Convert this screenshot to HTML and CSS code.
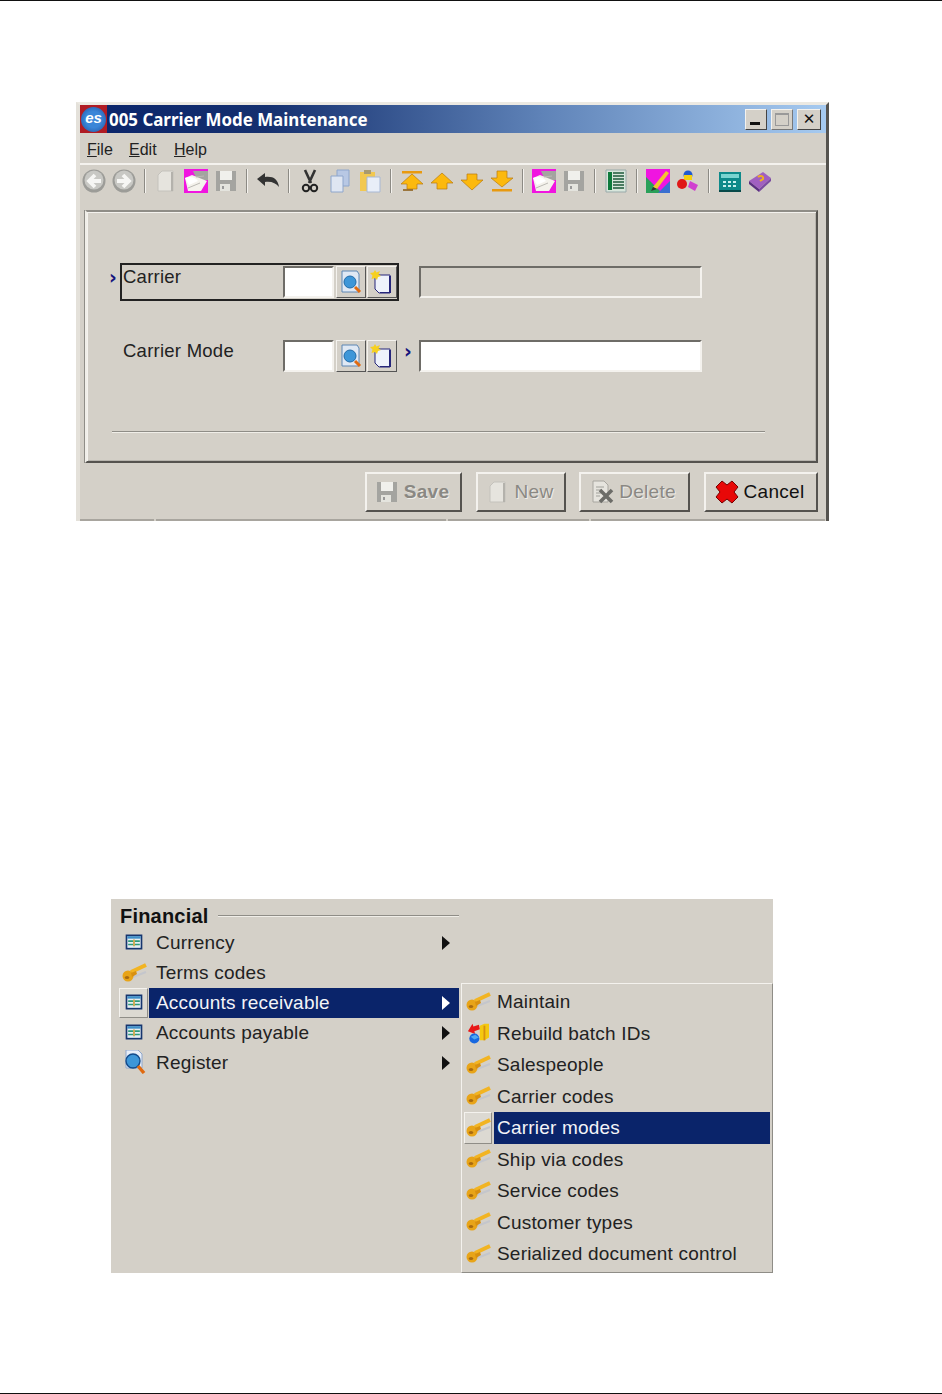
FILE: index.html
```html
<!DOCTYPE html>
<html lang="en">
<head>
<meta charset="utf-8">
<title>005 Carrier Mode Maintenance</title>
<link rel="stylesheet" href="styles.css">
</head>
<body>
<svg class="defs" width="0" height="0" aria-hidden="true">
  <defs>
    <symbol id="back" viewBox="0 0 24 24"><circle cx="12" cy="12" r="11.5" fill="#9c9c98"/><circle cx="12" cy="11" r="9.500" fill="#c8c8c4"/><path d="M19 12H9M13 6 7 12l6 6" fill="none" stroke="#f6f6f4" stroke-width="3.800"/></symbol>
    <symbol id="fwd" viewBox="0 0 24 24"><circle cx="12" cy="12" r="11.5" fill="#9c9c98"/><circle cx="12" cy="11" r="9.500" fill="#c8c8c4"/><path d="M5 12h10M11 6l6 6-6 6" fill="none" stroke="#f6f6f4" stroke-width="3.800"/></symbol>
    <symbol id="newdoc" viewBox="0 0 24 24"><path d="M8 2h11v20H4V6z" fill="#e6e4de" stroke="#c4c2bc"/><path d="M17 3h2v19h-2z" fill="#b4b2ac"/></symbol>
    <symbol id="open" viewBox="0 0 24 24"><path d="M0 0h24v24H0z" fill="#f015e0"/><path d="M9 2h15v9H13z" fill="#a4a4a0"/><path d="M1 9l7-3 10 4 5 2-6 10H4z" fill="#f4f2ec"/><path d="M1 9c5-2 10-1 13 3l-9 4z" fill="#fff"/><path d="M4 19l12-5M12 8l8-1" stroke="#bcbab4"/></symbol>
    <symbol id="disk" viewBox="0 0 24 24"><path d="M2 2h20v20H2z" fill="#a4a4a0"/><path d="M6 2h12v9H6z" fill="#f0f0ec"/><path d="M6 15h10v7H6z" fill="#e4e4de"/><path d="M8 17h2v3H8z" fill="#999"/></symbol>
    <symbol id="undo" viewBox="0 0 24 24"><path d="M1 10l8-6v4c8-1 13 2 14 10-3-4-8-6-14-5v4z" fill="#333"/></symbol>
    <symbol id="cut" viewBox="0 0 24 24"><path d="M7 1l6 13M17 1l-6 13" stroke="#333" stroke-width="2.6" fill="none"/><circle cx="8" cy="19" r="3.2" fill="none" stroke="#222" stroke-width="2"/><circle cx="16" cy="19" r="3.2" fill="none" stroke="#222" stroke-width="2"/></symbol>
    <symbol id="copy" viewBox="0 0 24 24"><path d="M9 1h12v16H9z" fill="#b8c8e4" stroke="#8ea6cc"/><path d="M3 7h12v16H3z" fill="#dfe6f2" stroke="#8ea6cc"/></symbol>
    <symbol id="paste" viewBox="0 0 24 24"><path d="M2 3h15v19H2z" fill="#f2c850"/><path d="M6 1h7v4H6z" fill="#a89a70"/><path d="M9 8h13v15H9z" fill="#e8eef8" stroke="#a8b8d4"/></symbol>
    <symbol id="first" viewBox="0 0 24 24"><path d="M2 2h20v2.5H2z" fill="#e89a10"/><path d="M12 5 23 15h-6v5H7v-5H1z" fill="#fcb90e" stroke="#b87a10" stroke-width=".7"/><path d="M3 21h10" stroke="#8a5a10" stroke-width="1.5"/></symbol>
    <symbol id="prev" viewBox="0 0 24 24"><path d="M12 4 23 14h-6v6H7v-6H1z" fill="#fcb90e" stroke="#b87a10" stroke-width=".7"/></symbol>
    <symbol id="next" viewBox="0 0 24 24"><path d="M12 21 23 11h-6V5H7v6H1z" fill="#fcb90e" stroke="#b87a10" stroke-width=".7"/></symbol>
    <symbol id="last" viewBox="0 0 24 24"><path d="M12 18 23 9h-6V2H7v7H1z" fill="#fcb90e" stroke="#b87a10" stroke-width=".7"/><path d="M2 20h20v2.5H2z" fill="#e89a10"/></symbol>
    <symbol id="list" viewBox="0 0 24 24"><path d="M2 1h20v22H2z" fill="#d8e6dc" stroke="#9aa"/><path d="M4 3h4v18H4z" fill="#0e7a3c"/><path d="M9 4h11M9 7h11M9 10h11M9 13h11M9 16h11M9 19h11" stroke="#1d5a3a" stroke-width="1.3"/></symbol>
    <symbol id="palette" viewBox="0 0 24 24"><path d="M0 0h24v24H0z" fill="#f015e0"/><path d="M0 8l16 16H0z" fill="#2aa05a"/><path d="M12 24 24 12v12z" fill="#3a6fd0"/><path d="M7 18 20 2l3 2L11 20z" fill="#f4c430"/><path d="M5 22l2-4 4 2z" fill="#333"/></symbol>
    <symbol id="blocks" viewBox="0 0 24 24"><circle cx="12" cy="6" r="4.5" fill="#1f5ad0"/><path d="M8 6h8v5H8z" fill="#f4d010"/><circle cx="6" cy="15" r="5" fill="#e01818"/><path d="M14 12l8 4-3 6-7-4z" fill="#d040d0"/></symbol>
    <symbol id="calc" viewBox="0 0 24 24"><path d="M1 3h22v19H1z" fill="#0e8a8a"/><path d="M3 5h18v4H3z" fill="#7ad4d0"/><path d="M5 12h3v2H5zm5 0h3v2h-3zm5 0h3v2h-3zM5 16h3v2H5zm5 0h3v2h-3zm5 0h3v2h-3z" fill="#c8f0ee"/><path d="M1 21h22v2H1z" fill="#084a4a"/></symbol>
    <symbol id="book" viewBox="0 0 24 24"><path d="M1 12 15 3l8 6-12 11z" fill="#a060c0"/><path d="M1 12l10 8v3L1 15z" fill="#5a2f80"/><path d="M11 20l12-11v3L11 23z" fill="#7a4aa0"/><path d="M10 8c2-2 6-1 5 2l-3 2" fill="none" stroke="#f0b020" stroke-width="2"/></symbol>
    <symbol id="lookup" viewBox="0 0 24 24"><path d="M3 1h15l2 3v18H3z" fill="#dfe8f4" stroke="#5d86b4"/><circle cx="11" cy="12" r="6" fill="#3d96d8" stroke="#1f6aa8"/><path d="M16 17l5 5" stroke="#e06a10" stroke-width="3"/></symbol>
    <symbol id="create" viewBox="0 0 24 24"><path d="M5 5h15v18H9l-4-4z" fill="#eef2fb" stroke="#25257a"/><path d="M19 6h2v17H10v-1h9z" fill="#25257a"/><path d="M5 0l1.5 2.5L10 1 8.5 4.500 11 6 8 7 7 10 5 8 1.500 9 2.500 5.500 0 3l3.500-.5z" fill="#f6d020"/></symbol>
    <symbol id="x" viewBox="0 0 24 24"><path d="M7 1l5 4 5-4 6 6-4 5 4 5-6 6-5-4-5 4-6-6 4-5-4-5z" fill="#e80808" stroke="#700" stroke-width="1"/></symbol>
    <symbol id="del" viewBox="0 0 24 24"><path d="M3 1h11l4 4v17H3z" fill="#e6e4de" stroke="#a8a6a0"/><path d="M6 7h8M6 10h6M6 13h5M6 16h4" stroke="#a0a09a"/><path d="M10 22l12-12M10 10l12 12" stroke="#6c6c68" stroke-width="3.6"/></symbol>
    <symbol id="key" viewBox="0 0 26 22"><path d="M12 15 25 10" stroke="#c4c6cc" stroke-width="2" fill="none"/><path d="M25 3 10 10" stroke="#f2b422" stroke-width="4" fill="none"/><circle cx="7" cy="14" r="5.500" fill="#e8a418"/><ellipse cx="6" cy="15.500" rx="2.200" ry="1.500" fill="#a86a10"/><path d="M10 11l5-2 1 3-5 3z" fill="#d89010"/></symbol>
    <symbol id="table" viewBox="0 0 24 24"><path d="M2 3h20v18H2z" fill="#17356e"/><path d="M4 5h16v14H4z" fill="#e6eef4"/><path d="M4 5h16v3H4z" fill="#3f8fc8"/><path d="M5 10h6v2H5zm8 0h6v2h-6zM5 14h6v2H5zm8 0h6v2h-6z" fill="#2f9a7a"/><path d="M11 9h2v8h-2z" fill="#c8a03a"/></symbol>
    <symbol id="search" viewBox="0 0 24 24"><path d="M4 0h12l4 4v14H4z" fill="#e8eef8" stroke="#8ea6cc"/><circle cx="11" cy="11" r="7" fill="#3d96d8" stroke="#124a8a" stroke-width="1.400"/><path d="M16 16l6 7" stroke="#e06a10" stroke-width="3.400"/></symbol>
    <symbol id="rebuild" viewBox="0 0 26 24"><path d="M15 4l5-2h5v15l-5 3h-5z" fill="#f4c810"/><path d="M19 4h2v16h-2z" fill="#d89010"/><path d="M2 10l5-8 1 3 6-2 1 5-6 2 1 3z" fill="#e81818"/><circle cx="9" cy="18" r="5.500" fill="#1868e0"/><path d="M5 16l5-2 4 3-5 2z" fill="#50a8f0"/></symbol>
  </defs>
</svg>

<div class="rule rule-top"></div>

<section class="window">
  <header class="titlebar">
    <span class="logo"><span class="logo-globe">es</span></span>
    <h1 class="title">005 Carrier Mode Maintenance</h1>
    <div class="winbtns">
      <span class="winbtn"><i class="glyph-min"></i></span>
      <span class="winbtn winbtn-off"><i class="glyph-max"></i></span>
      <span class="winbtn winbtn-close">✕</span>
    </div>
  </header>
  <nav class="menubar">
    <span><u>F</u>ile</span><span><u>E</u>dit</span><span><u>H</u>elp</span>
  </nav>
  <div class="toolbar">
    <svg class="tool"><use href="#back"/></svg>
    <svg class="tool"><use href="#fwd"/></svg>
    <i class="sep"></i>
    <svg class="tool"><use href="#newdoc"/></svg>
    <svg class="tool"><use href="#open"/></svg>
    <svg class="tool"><use href="#disk"/></svg>
    <i class="sep"></i>
    <svg class="tool"><use href="#undo"/></svg>
    <i class="sep"></i>
    <svg class="tool"><use href="#cut"/></svg>
    <svg class="tool"><use href="#copy"/></svg>
    <svg class="tool"><use href="#paste"/></svg>
    <i class="sep"></i>
    <svg class="tool"><use href="#first"/></svg>
    <svg class="tool"><use href="#prev"/></svg>
    <svg class="tool"><use href="#next"/></svg>
    <svg class="tool"><use href="#last"/></svg>
    <i class="sep"></i>
    <svg class="tool"><use href="#open"/></svg>
    <svg class="tool"><use href="#disk"/></svg>
    <i class="sep"></i>
    <svg class="tool"><use href="#list"/></svg>
    <i class="sep"></i>
    <svg class="tool"><use href="#palette"/></svg>
    <svg class="tool"><use href="#blocks"/></svg>
    <i class="sep"></i>
    <svg class="tool"><use href="#calc"/></svg>
    <svg class="tool"><use href="#book"/></svg>
  </div>

  <div class="group">
    <div class="row row-carrier">
      <span class="chev">›</span>
      <div class="focusbox">
        <label class="field-label label-focus">Carrier</label>
        <span class="input input-short"></span>
        <span class="squarebtn"><svg class="ico-sq"><use href="#lookup"/></svg></span>
        <span class="squarebtn"><svg class="ico-sq"><use href="#create"/></svg></span>
      </div>
      <span class="input input-long input-disabled"></span>
    </div>
    <div class="row row-mode">
      <label class="field-label">Carrier Mode</label>
      <span class="input input-short"></span>
      <span class="squarebtn"><svg class="ico-sq"><use href="#lookup"/></svg></span>
      <span class="squarebtn"><svg class="ico-sq"><use href="#create"/></svg></span>
      <span class="chev chev-mode">›</span>
      <span class="input input-long"></span>
    </div>
    <div class="etched"></div>
  </div>

  <div class="actions">
    <span class="btn btn-save is-off"><svg class="btn-ico"><use href="#disk"/></svg><b>Save</b></span>
    <span class="btn btn-new is-off"><svg class="btn-ico"><use href="#newdoc"/></svg>New</span>
    <span class="btn btn-delete is-off"><svg class="btn-ico"><use href="#del"/></svg>Delete</span>
    <span class="btn btn-cancel"><svg class="btn-ico"><use href="#x"/></svg>Cancel</span>
  </div>
  <div class="clip-strip">
    <i class="s1"></i><i class="s2"></i><i class="s3"></i><i class="s4"></i>
  </div>
</section>

<section class="menu">
  <div class="menu-main">
    <div class="menu-head"><b>Financial</b><i class="head-line"></i></div>
    <ul class="list">
      <li class="item"><span class="slot"><svg class="ico-t"><use href="#table"/></svg></span><span class="item-text">Currency</span><span class="arrow"></span></li>
      <li class="item"><span class="slot"><svg class="ico-k"><use href="#key"/></svg></span><span class="item-text">Terms codes</span></li>
      <li class="item active"><span class="slot"><svg class="ico-t"><use href="#table"/></svg></span><span class="item-text">Accounts receivable</span><span class="arrow"></span></li>
      <li class="item"><span class="slot"><svg class="ico-t"><use href="#table"/></svg></span><span class="item-text">Accounts payable</span><span class="arrow"></span></li>
      <li class="item"><span class="slot"><svg class="ico-t ico-s"><use href="#search"/></svg></span><span class="item-text">Register</span><span class="arrow"></span></li>
    </ul>
  </div>
  <ul class="submenu">
    <li class="subitem"><span class="subslot"><svg class="ico-k"><use href="#key"/></svg></span><span class="sub-text">Maintain</span></li>
    <li class="subitem"><span class="subslot"><svg class="ico-k"><use href="#rebuild"/></svg></span><span class="sub-text">Rebuild batch IDs</span></li>
    <li class="subitem"><span class="subslot"><svg class="ico-k"><use href="#key"/></svg></span><span class="sub-text">Salespeople</span></li>
    <li class="subitem"><span class="subslot"><svg class="ico-k"><use href="#key"/></svg></span><span class="sub-text">Carrier codes</span></li>
    <li class="subitem active"><span class="subslot"><svg class="ico-k"><use href="#key"/></svg></span><span class="sub-text">Carrier modes</span></li>
    <li class="subitem"><span class="subslot"><svg class="ico-k"><use href="#key"/></svg></span><span class="sub-text">Ship via codes</span></li>
    <li class="subitem"><span class="subslot"><svg class="ico-k"><use href="#key"/></svg></span><span class="sub-text">Service codes</span></li>
    <li class="subitem"><span class="subslot"><svg class="ico-k"><use href="#key"/></svg></span><span class="sub-text">Customer types</span></li>
    <li class="subitem"><span class="subslot"><svg class="ico-k"><use href="#key"/></svg></span><span class="sub-text">Serialized document control</span></li>
  </ul>
</section>

<div class="rule rule-bottom"></div>
</body>
</html>
```
FILE: styles.css
```css
* { box-sizing: border-box; }
html, body { margin: 0; padding: 0; }
body {
  width: 942px;
  height: 1394px;
  background: #fff;
  overflow: hidden;
  font-family: "Liberation Sans", Arial, sans-serif;
  color: #1c1c1c;
  display: flex;
  flex-direction: column;
}
.defs { position: absolute; }
.rule { height: 1px; background: #111; flex: none; }
.rule-bottom { margin-top: 120px; }

/* window */
.window {
  flex: none;
  width: 753px;
  height: 419px;
  margin: 101px 0 0 76px;
  background: #d4d0c8;
  border-top: 3px solid #ece9e2;
  border-left: 4px solid #e4e1da;
  border-right: 3px solid #55534f;
  display: flex;
  flex-direction: column;
}
.titlebar {
  height: 28px;
  flex: none;
  display: flex;
  align-items: center;
  background: linear-gradient(90deg, #0a246a 0%, #15306f 25%, #5f83b8 62%, #a6caf0 100%);
  color: #fff;
}
.logo {
  width: 27px;
  height: 28px;
  background: #b01c24;
  flex: none;
  display: flex;
  align-items: center;
  justify-content: center;
}
.logo-globe {
  width: 25px;
  height: 25px;
  border-radius: 50%;
  background: radial-gradient(circle, #3a86d8 45%, #1f4f9c 100%);
  color: #fff;
  font: italic bold 15px/22px "Liberation Sans", sans-serif;
  text-align: center;
}
.title {
  margin: 0 0 0 2px;
  font: bold 16.900px/29px "Noto Sans", sans-serif;
  white-space: nowrap;
}
.winbtns { margin-left: auto; margin-right: 5px; display: flex; gap: 4px; }
.winbtn {
  width: 22px;
  height: 21px;
  background: #d4d0c8;
  border: 1px solid;
  border-color: #f4f2ee #444 #444 #f4f2ee;
  display: flex;
  align-items: center;
  justify-content: center;
  color: #111;
  font: bold 15px/1 "DejaVu Sans", sans-serif;
}
.winbtn-off { border-color: #f4f2ee #777 #777 #f4f2ee; }
.winbtn-close { width: 24px; }
.glyph-min { width: 10px; height: 3px; background: #111; margin-top: 9px; margin-right: 2px; }
.glyph-max { width: 14px; height: 13px; border: 1px solid #999; border-top-width: 2px; }

.menubar {
  height: 32px;
  flex: none;
  display: flex;
  align-items: center;
  padding: 3px 0 0 7px;
  font-size: 16px;
  border-bottom: 2px solid;
  border-image: linear-gradient(#888 50%, #f4f2ee 50%) 2;
  color: #222;
}
.menubar span:nth-child(1) { width: 42px; }
.menubar span:nth-child(2) { width: 45px; }

.toolbar {
  height: 46px;
  flex: none;
  display: flex;
  align-items: flex-start;
  padding-top: 4px;
  margin-left: -1px;
}
.tool { width: 24px; height: 24px; margin: 0 3px; flex: none; }
.sep {
  width: 2px;
  height: 24px;
  margin: 0 5px;
  background: linear-gradient(90deg, #8c8a84 50%, #f4f2ee 50%);
  flex: none;
}

/* group box */
.group {
  flex: none;
  width: 733px;
  height: 253px;
  margin: -1px 0 1px 5px;
  border: 2px solid;
  border-color: #8f8d87 #55534f #55534f #f0eee8;
  box-shadow: inset 1px 1px 0 #f4f2ee, inset -1px -1px 0 #b8b5ae, -1px 0 0 #8f8d87;
  display: flex;
  flex-direction: column;
}
.row { display: flex; align-items: center; flex: none; }
.row-carrier { margin-top: 51px; height: 38px; padding-left: 22px; }
.row-mode { margin-top: 39px; height: 32px; padding-left: 36px; }
.chev { width: 11px; color: #14147c; font: bold 19px/1 "DejaVu Sans", sans-serif; margin-top: -10px; flex: none; }
.chev-mode { margin: -10px 0 0 7px; width: 15px; }
.focusbox {
  width: 279px;
  height: 38px;
  border: 2px solid #222;
  display: flex;
  align-items: center;
  padding-left: 1px;
  margin-right: 20px;
}
.field-label { font-size: 18.500px; letter-spacing: .25px; color: #222; width: 160px; margin-top: -10px; flex: none; white-space: nowrap; }
.input {
  display: block;
  background: #fff;
  height: 32px;
  border: 2px solid;
  border-color: #6e6c67 #f4f2ee #f4f2ee #6e6c67;
  flex: none;
}
.input-short { width: 51px; margin-right: 2px; }
.input-long { width: 283px; }
.input-disabled { background: #d4d0c8; }
.squarebtn {
  width: 30px;
  height: 32px;
  background: #d4d0c8;
  border: 1px solid;
  border-color: #f4f2ee #555 #555 #f4f2ee;
  display: flex;
  align-items: center;
  justify-content: center;
  flex: none;
}
.squarebtn + .squarebtn { margin-left: 1px; }
.ico-sq { width: 24px; height: 24px; }
.etched {
  margin: 59px 0 0 25px;
  width: 653px;
  height: 2px;
  background: linear-gradient(#8f8d87 50%, #f0eee8 50%);
  flex: none;
}

/* action buttons */
.actions {
  flex: none;
  height: 55px;
  display: flex;
  align-items: flex-start;
  padding-top: 8px;
  padding-left: 285px;
}
.btn {
  height: 40px;
  background: #d4d0c8;
  border: 2px solid;
  border-color: #f4f2ee #55534f #55534f #f4f2ee;
  display: flex;
  align-items: center;
  justify-content: center;
  gap: 5px;
  padding-right: 3px;
  font-size: 19px;
  letter-spacing: .3px;
  color: #111;
  flex: none;
}
.is-off { color: #8a8883; text-shadow: 1px 1px 0 #efede8; }
.btn-save { width: 97px; margin-right: 14px; }
.btn-new { width: 90px; margin-right: 13px; }
.btn-delete { width: 111px; margin-right: 14px; }
.btn-cancel { width: 114px; }
.btn-ico { width: 24px; height: 24px; flex: none; }

.clip-strip { flex: none; height: 2px; display: flex; gap: 2px; }
.clip-strip i { height: 2px; background: #a8a59e; display: block; }
.s1 { width: 74px; }
.s2 { width: 290px; }
.s3 { width: 141px; }
.s4 { width: 234px; }

/* cascading menu */
.menu {
  flex: none;
  width: 662px;
  height: 374px;
  margin: 378px 0 0 111px;
  background: #d4d0c8;
  display: flex;
  font-size: 19px;
  letter-spacing: .2px;
  color: #222;
}
.menu-main { width: 348px; flex: none; padding-left: 8px; }
.menu-head { height: 29px; display: flex; align-items: center; padding-top: 5px; font-size: 20px; letter-spacing: .2px; color: #111; }
.menu-head b { margin-left: 1px; }
.head-line {
  flex: 1;
  height: 2px;
  margin-left: 9px;
  background: linear-gradient(#8f8d87 50%, #f0eee8 50%);
}
.list, .submenu { list-style: none; margin: 0; padding: 0; }
.item { height: 30px; display: flex; align-items: center; }
.slot { width: 29px; height: 30px; flex: none; display: flex; align-items: center; justify-content: center; margin-right: 1px; }
.item-text { flex: 1; padding-left: 7px; height: 30px; line-height: 29px; white-space: nowrap; }
.arrow {
  width: 0;
  height: 0;
  border-left: 8px solid #111;
  border-top: 7px solid transparent;
  border-bottom: 7px solid transparent;
  margin-right: 9px;
  margin-left: -17px;
}
.item.active .slot, .subitem.active .subslot {
  background: #dcd9d2;
  border: 1px solid;
  border-color: #f4f2ee #8f8d87 #8f8d87 #f4f2ee;
}
.item.active .item-text, .subitem.active .sub-text {
  background: #0a246a;
  color: #f4f4f8;
}
.item.active .arrow { border-left-color: #fff; }
.ico-t { width: 20px; height: 20px; margin-top: -2px; }
.ico-k { width: 26px; height: 22px; }
.ico-s { width: 24px; height: 24px; }
.submenu {
  width: 312px;
  height: 290px;
  margin: 84px 0 0 2px;
  flex: none;
  padding: 2px 2px 0 2px;
  border: 1px solid;
  border-color: #f4f2ee #8f8d87 #8f8d87 #f4f2ee;
}
.subitem { height: 31.500px; display: flex; align-items: center; }
.subslot { width: 28px; height: 31.500px; flex: none; display: flex; align-items: center; justify-content: center; margin-right: 2px; }
.sub-text { flex: 1; padding-left: 3px; height: 31.500px; line-height: 31px; white-space: nowrap; }
```
